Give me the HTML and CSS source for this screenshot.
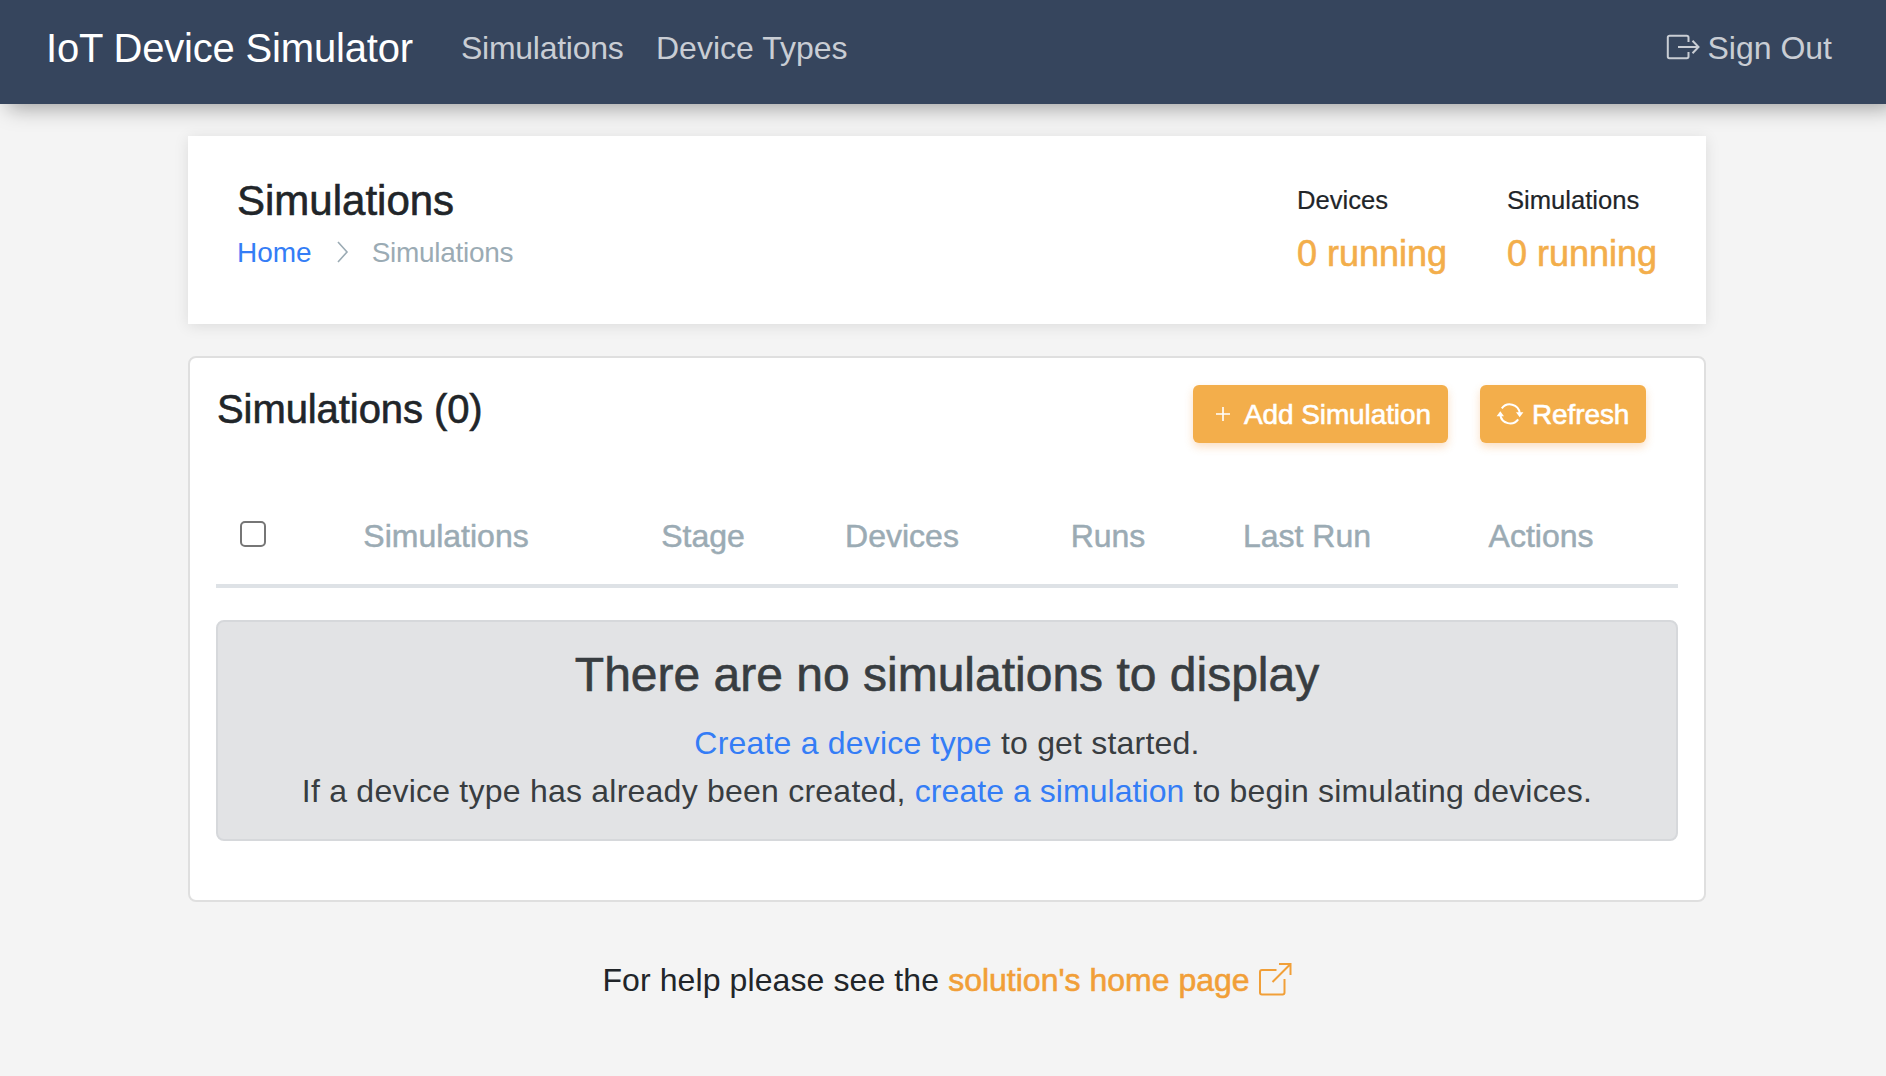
FILE: index.html
```html
<!DOCTYPE html>
<html lang="en">
<head>
<meta charset="utf-8">
<title>IoT Device Simulator</title>
<link rel="stylesheet" href="styles.css">
</head>
<body>
<nav class="navbar">
  <a class="brand">IoT Device Simulator</a>
  <a class="nav-link nav-sims">Simulations</a>
  <a class="nav-link">Device Types</a>
  <a class="nav-link sign-out">
    <svg width="34" height="26" viewBox="0 0 34 26"><path d="M22.5 8V3.5a1.7 1.7 0 0 0-1.7-1.7H3.5a1.7 1.7 0 0 0-1.7 1.7v19a1.7 1.7 0 0 0 1.7 1.7h17.3a1.7 1.7 0 0 0 1.7-1.7V18M12 13h20M26.5 6.8l6 6.2-6 6.2"/></svg>
    <span>Sign Out</span></a>
</nav>
<main class="container">
  <header class="page-header">
    <div>
      <h1 class="page-title medium">Simulations</h1>
      <div class="breadcrumb">
        <a class="link">Home</a>
        <svg class="icon-chevron" width="14" height="22" viewBox="0 0 14 22"><path d="M2 1l9 10-9 10"/></svg>
        <span class="crumb-current">Simulations</span>
      </div>
    </div>
    <div class="stats">
      <div><div class="stat-label">Devices</div><div class="stat-value medium">0 running</div></div>
      <div><div class="stat-label">Simulations</div><div class="stat-value medium">0 running</div></div>
    </div>
  </header>
  <section class="card">
    <div class="card-head">
      <h2 class="card-title medium">Simulations (0)</h2>
      <button class="btn btn-add medium"><svg width="16" height="16" viewBox="0 0 16 16"><path d="M8 1v14M1 8h14"/></svg><span>Add Simulation</span></button>
      <button class="btn btn-refresh medium"><svg width="28" height="24" viewBox="0 0 28 24"><path d="M5.8 6.4A10 10 0 0 1 23.7 11M22.2 17.4A10 10 0 0 1 4.3 13"/><path class="solid" d="M.6 14.3l3.7-5 3.7 5zM20 10.3l3.7 5 3.7-5z"/></svg><span>Refresh</span></button>
    </div>
    <table class="table">
      <colgroup><col class="c1"><col class="c2"><col class="c3"><col class="c4"><col class="c5"><col class="c6"><col class="c7"></colgroup>
      <thead><tr>
        <th class="check"><input type="checkbox" class="checkbox"></th>
        <th>Simulations</th><th>Stage</th><th>Devices</th><th>Runs</th><th>Last Run</th><th>Actions</th>
      </tr></thead>
    </table>
    <div class="alert">
      <h3 class="alert-title medium">There are no simulations to display</h3>
      <p class="alert-text"><a class="link">Create a device type</a> to get started.</p>
      <p class="alert-text"><span class="lead">If a device type has already been created, </span><a class="link link-sim">create a simulation</a> to begin simulating devices.</p>
    </div>
  </section>
  <footer class="footer"><span class="help-text">For help please see the&nbsp;</span><a class="help-link medium"><span>solution's home page</span><svg class="icon-external" width="34" height="34" viewBox="0 0 34 34"><path d="M18.500 8H4a2 2 0 0 0-2 2v20.500a2 2 0 0 0 2 2h20.500a2 2 0 0 0 2-2V17M14.500 20L32 2.500M21 2h11.500v11"/></svg></a></footer>
</main>
</body>
</html>
```
FILE: styles.css
```css
* { box-sizing: border-box; }
body { margin: 0; min-height: 1076px; background: #f4f4f4; color: #212529; font: 32px/48px "Liberation Sans", Arial, sans-serif; }
h1, h2, h3, p { margin: 0; font-weight: 400; }
svg { fill: none; stroke: currentColor; stroke-width: 2; flex: none; }
.medium { -webkit-text-stroke: 0.6px currentColor; }
.link { color: #347df6; }

.navbar { display: flex; align-items: center; height: 104px; padding: 0 54px 8px 46px; background: #36455d; box-shadow: 8px 4px 20px rgba(0,0,0,.35); }
.brand { width: 415px; color: #fff; font-size: 40px; letter-spacing: -.18px; }
.nav-link { color: #c9cdd4; }
.nav-sims { width: 195px; letter-spacing: -.27px; }
.sign-out { display: flex; align-items: center; gap: 7px; margin-left: auto; }
.sign-out svg { margin-top: -2px; }

.container { width: 1518px; margin: 32px 180px 0 188px; }
.page-header { display: flex; justify-content: space-between; height: 188px; padding: 40px 0 0 49px; background: #fff; box-shadow: 0 2px 14px rgba(0,0,0,.1); }
.page-title { font-size: 42px; line-height: 49px; }
.breadcrumb { display: flex; align-items: center; margin-top: 7px; font-size: 28px; line-height: 42px; color: #9babb4; }
.crumb-current { letter-spacing: -.3px; }
.icon-chevron { margin: -2px 22px 0 24px; stroke-width: 1.6; }
.stats { display: grid; grid-template-columns: 210px 199px; }
.stat-label { font-size: 25.6px; line-height: 48px; -webkit-text-stroke: 0.2px currentColor; }
.stat-value { font-size: 36px; line-height: 59px; color: #f3ae4b; }

.card { height: 546px; margin-top: 32px; padding: 27px 26px; background: #fff; border: 2px solid #dfdfdf; border-radius: 8px; }
.card-head { display: flex; align-items: flex-start; height: 103px; padding-right: 32px; }
.card-title { margin: 0 auto 0 1px; font-size: 40px; letter-spacing: -.08px; }
.btn { display: flex; align-items: center; height: 58px; border: 0; border-radius: 6px; background: #f3ae4b; color: #fff; font: 28px/42px "Liberation Sans", Arial, sans-serif; box-shadow: 0 4px 8px rgba(243,150,60,.3); white-space: nowrap; }
.btn span { margin-top: 2px; }
.btn svg { margin-top: -1px; }
.btn-add { width: 255px; padding: 0 0 0 22px; gap: 13px; letter-spacing: -.1px; }
.btn-add svg { stroke-width: 1.6; }
.btn-refresh { width: 166px; margin-left: 32px; padding: 0 0 0 16px; gap: 8px; letter-spacing: -.1px; }
.solid { fill: currentColor; stroke: none; }

.table { width: 1462px; table-layout: fixed; border-collapse: separate; border-spacing: 0; color: #9babb4; }
.table th { height: 100px; padding: 0 0 1px; border-bottom: 4px solid #dee2e6; font-weight: 400; text-align: center; -webkit-text-stroke: 0.5px currentColor; }
.c1 { width: 68px; } .c2 { width: 324px; } .c3 { width: 190px; } .c4 { width: 208px; } .c5 { width: 204px; } .c6 { width: 194px; } .c7 { width: 274px; }
.table .check { line-height: 0; }
.checkbox { appearance: none; display: block; width: 26px; height: 26px; margin: 0 0 3px 24px; border: 2px solid #767676; border-radius: 5px; background: #fff; }

.alert { margin-top: 32px; height: 221px; padding-top: 24px; border: 2px solid #d6d8db; border-radius: 8px; background: #e2e3e5; color: #383d41; text-align: center; }
.alert-title { font-size: 48px; line-height: 58px; margin-bottom: 15px; }
.alert-text { white-space: nowrap; letter-spacing: .2px; }
.alert-text .lead { letter-spacing: .23px; }
.alert-text .link-sim { letter-spacing: .05px; }

.footer { display: flex; justify-content: center; margin-top: 54px; }
.help-text { letter-spacing: .1px; }
.help-link { display: flex; gap: 8px; color: #f19f38; }
.icon-external { margin-top: 6px; }
```
